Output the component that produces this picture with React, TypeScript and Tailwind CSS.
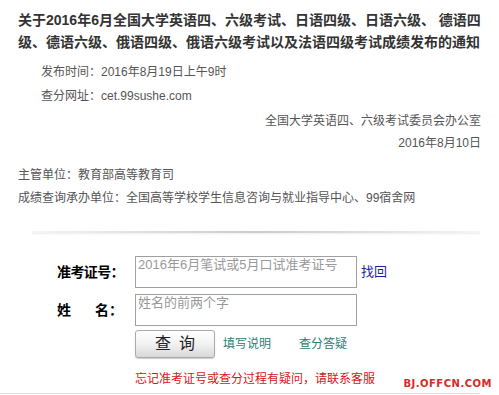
import React from 'react'

const font = { fontFamily: '"Liberation Sans", "Noto Sans CJK SC", sans-serif' }

export default function App() {
  return (
    <div className="relative w-[499px] h-[395px] overflow-hidden bg-white" style={font}>
      <div className="pt-[9px] px-[18px]">
        <h1 className="text-[14px] font-bold leading-[22px] text-[#333]">
          关于2016年6月全国大学英语四、六级考试、日语四级、日语六级、 德语四级、德语六级、俄语四级、俄语六级考试以及法语四级考试成绩发布的通知
        </h1>

        <div className="mt-[7px] pl-[23px] text-[12px] leading-[24px] text-[#555]">
          <p>发布时间：2016年8月19日上午9时</p>
          <p>查分网址：cet.99sushe.com</p>
        </div>

        <div className="mt-[2px] text-right text-[12px] leading-[22px] text-[#555]">
          <p>全国大学英语四、六级考试委员会办公室</p>
          <p>2016年8月10日</p>
        </div>

        <div className="mt-[10px] text-[12px] leading-[23px] text-[#555]">
          <p>主管单位：教育部高等教育司</p>
          <p>成绩查询承办单位：全国高等学校学生信息咨询与就业指导中心、99宿舍网</p>
        </div>
      </div>

      <div className="mt-[21px] ml-[32px] w-[448px] h-[2px] bg-gradient-to-r from-[#f5f5f5] via-[#c8ccca] to-[#f5f5f5] shadow-[0_1px_2px_rgba(0,0,0,0.08)]" />

      <div className="mt-[23px]">
        <div className="flex items-center">
          <div className="ml-[57px] w-[66px] text-[14px] font-bold text-black whitespace-nowrap tracking-[-0.6px]">准考证号：</div>
          <div className="ml-[12px] w-[222px] h-[32px] border border-[#a0a0a0] px-[2px] text-[13px] leading-[16px] text-[#999]">
            2016年6月笔试或5月口试准考证号
          </div>
          <a className="ml-[4px] text-[13px] text-[#1c1ca8]">找回</a>
        </div>

        <div className="mt-[6px] flex items-center">
          <div className="ml-[57px] w-[66px] flex justify-between text-[14px] font-bold text-black">
            <span>姓</span>
            <span>名：</span>
          </div>
          <div className="ml-[12px] w-[222px] h-[32px] border border-[#a0a0a0] px-[2px] text-[13px] leading-[16px] text-[#999]">
            姓名的前两个字
          </div>
        </div>

        <div className="mt-[4px] ml-[135px] flex items-center">
          <button className="w-[80px] h-[28px] rounded-[3px] border border-[#aaa] bg-gradient-to-b from-[#ffffff] via-[#f2f2f2] to-[#d8d8d8] text-[16px] leading-none text-[#222] tracking-[8px] pl-[8px] shadow-[0_1px_1px_rgba(0,0,0,0.2)]">
            查询
          </button>
          <a className="ml-[8px] text-[12px] text-[#2a8072]">填写说明</a>
          <a className="ml-[28px] text-[12px] text-[#2a8072]">查分答疑</a>
        </div>

        <p className="mt-[13px] ml-[135px] text-[12px] leading-[16px] text-[#d41616]">
          忘记准考证号或查分过程有疑问，请联系客服
        </p>
      </div>

      <div className="mt-[6px] w-[480px] h-px bg-[#dcdcdc]" />

      <div className="absolute right-[5px] bottom-[6px] bg-white px-[2px] text-[10px] font-bold leading-none tracking-[0.5px] text-[#d42a2a]" style={{ fontFamily: '"DejaVu Sans", sans-serif' }}>
        BJ.OFFCN.COM
      </div>
    </div>
  )
}
